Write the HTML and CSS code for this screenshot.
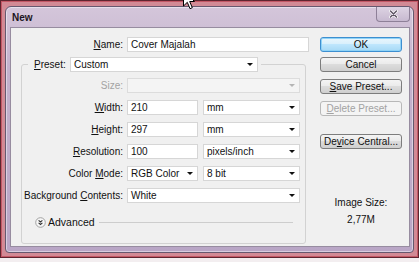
FILE: index.html
```html
<!DOCTYPE html>
<html lang="en">
<head>
    <meta charset="UTF-8">
    <title>New</title>
    <link rel="stylesheet" href="styles.css">
</head>
<body>
<div class="desk">
    <svg class="cursor" width="13" height="20" viewBox="0 0 13 20"><path d="M0.5 0.5 L0.5 16 L4.3 12.3 L7 18.7 L9.3 17.7 L6.7 11.5 L11.5 11.5 Z" fill="#fff" stroke="#000" stroke-width="1"/></svg>
    <div class="window">
        <div class="titlebar">
            <span class="title">New</span>
            <span class="close">
                <svg width="9" height="8" viewBox="0 0 9 8"><path d="M1.5 1 L7.5 7 M7.5 1 L1.5 7" stroke="#fff" stroke-width="3" stroke-linecap="round"/><path d="M1.5 1 L7.5 7 M7.5 1 L1.5 7" stroke="#5e5566" stroke-width="1.5" stroke-linecap="round"/></svg>
            </span>
        </div>
        <div class="client">
            <div class="form">
                <div class="row">
                    <label class="lbl name-lbl"><u>N</u>ame:</label>
                    <div class="field name-field">Cover Majalah</div>
                </div>

                <div class="group">
                    <div class="preset">
                        <label class="preset-lbl"><u>P</u>reset:</label>
                        <div class="field select preset-field">Custom<i class="arrow"></i></div>
                    </div>

                    <div class="rows">
                        <div class="row">
                            <label class="lbl off">Size:</label>
                            <div class="field select full off"><span></span><i class="arrow"></i></div>
                        </div>
                        <div class="row">
                            <label class="lbl"><u>W</u>idth:</label>
                            <div class="field small">210</div>
                            <div class="field select unit">mm<i class="arrow"></i></div>
                        </div>
                        <div class="row">
                            <label class="lbl"><u>H</u>eight:</label>
                            <div class="field small">297</div>
                            <div class="field select unit">mm<i class="arrow"></i></div>
                        </div>
                        <div class="row">
                            <label class="lbl"><u>R</u>esolution:</label>
                            <div class="field small">100</div>
                            <div class="field select unit">pixels/inch<i class="arrow"></i></div>
                        </div>
                        <div class="row">
                            <label class="lbl">Color <u>M</u>ode:</label>
                            <div class="field select small">RGB Color<i class="arrow"></i></div>
                            <div class="field select unit">8 bit<i class="arrow"></i></div>
                        </div>
                        <div class="row">
                            <label class="lbl">Background <u>C</u>ontents:</label>
                            <div class="field select full">White<i class="arrow"></i></div>
                        </div>
                    </div>

                    <div class="advanced">
                        <svg class="chev" width="11" height="11" viewBox="0 0 11 11">
                            <circle cx="5.5" cy="5.5" r="4.8" fill="#f7f7f7" stroke="#a2a2a2"/>
                            <path d="M3.6 3.4 L5.5 5 L7.4 3.4 M3.6 5.9 L5.5 7.5 L7.4 5.9" fill="none" stroke="#333" stroke-width="1.1"/>
                        </svg>
                        <span>Advanced</span>
                        <span class="rule"></span>
                    </div>
                </div>
            </div>

            <div class="side">
                <button class="btn ok">OK</button>
                <button class="btn cancel">Cancel</button>
                <button class="btn save"><u>S</u>ave Preset...</button>
                <button class="btn off delete"><u>D</u>elete Preset...</button>
                <button class="btn device">De<u>v</u>ice Central...</button>
                <div class="size-lbl">Image Size:</div>
                <div class="size-val">2,77M</div>
            </div>
        </div>
    </div>
</div>
</body>
</html>
```

FILE: styles.css
```css
*{
    margin:0;
    padding:0;
    box-sizing:border-box;
}
body {
    background:#f3eef0;
    font-family:"Liberation Sans", Arial, sans-serif;
    font-size:10px;
    color:#111;
}
.desk {
    position:relative;
    width:419px;
    height:258px;
    border:1px solid #5e2630;
    box-shadow:inset 0 0 0 1px #c45866;
    background:#d28a95;
    padding:5px 0 0 4px;
}
.cursor {
    position:absolute;
    left:182px;
    top:-11px;
    z-index:2;
}
.window {
    width:409px;
    height:247px;
    border:1px solid #66586f;
    border-radius:6px 6px 4px 4px;
    background:linear-gradient(#d4c6da, #c4b2cd 25%, #b9a6c6);
    box-shadow:inset 0 0 0 1px rgba(255,255,255,0.45);
    padding:0 3px 5px 4px;
    display:flex;
    flex-direction:column;
}
.titlebar {
    height:20px;
    display:flex;
    justify-content:space-between;
    align-items:flex-start;
}
.title {
    padding:5px 0 0 2px;
    font-weight:bold;
    color:#1d1522;
}
.close {
    width:34px;
    height:15px;
    border:1px solid #8e8098;
    border-top:none;
    border-radius:0 0 4px 4px;
    background:linear-gradient(#ddd3e3, #c7b9d0);
    display:flex;
    align-items:center;
    justify-content:center;
}
.client {
    flex:1;
    border:1px solid #978ca0;
    background:#f0f0f0;
    display:flex;
}
.form {
    width:298px;
    padding:9px 0 0 10px;
}
.row {
    display:flex;
    align-items:center;
    height:15px;
}
.lbl {
    width:101px;
    text-align:right;
    white-space:nowrap;
}
.name-lbl {
    width:102px;
}
.off {
    color:#a3a3a3;
}
.field {
    height:15px;
    margin-left:4px;
    padding:0 4px 0 3px;
    background:#fff;
    border:1px solid #d6d6d6;
    line-height:13px;
    white-space:nowrap;
}
.select {
    display:flex;
    align-items:center;
    justify-content:space-between;
}
.arrow {
    width:0;
    height:0;
    border-left:3px solid transparent;
    border-right:3px solid transparent;
    border-top:3px solid #111;
}
.off .arrow {
    border-top-color:#b5b5b5;
}
.field.off {
    background:#f4f4f4;
    border-color:#dcdcdc;
}
.name-field {
    width:182px;
}
.group {
    width:285px;
    height:180px;
    margin-top:12px;
    border:1px solid #d2d2d2;
    border-radius:3px;
}
.preset {
    display:flex;
    align-items:center;
    width:233px;
    height:15px;
    margin:-8px 0 0 6px;
    padding:0 3px 0 6px;
    background:#f0f0f0;
}
.preset-lbl {
    width:32px;
}
.preset-field {
    width:188px;
}
.rows {
    display:flex;
    flex-direction:column;
    gap:7px;
    margin-top:6px;
}
.full {
    width:173px;
}
.small {
    width:71px;
}
.unit {
    width:97px;
    margin-left:5px;
}
.advanced {
    display:flex;
    align-items:center;
    height:12px;
    margin:13px 12px 0 13px;
    font-size:10.5px;
}
.chev {
    margin-right:2px;
}
.rule {
    flex:1;
    height:1px;
    margin-left:4px;
    background:#cdcdcd;
}
.side {
    width:82px;
    margin-left:11px;
    padding-top:9px;
    display:flex;
    flex-direction:column;
}
.btn {
    height:15px;
    font-family:"Liberation Sans", Arial, sans-serif;
    font-size:10px;
    color:#111;
    border:1px solid #7d7d7d;
    border-radius:3px;
    background:linear-gradient(#f4f4f4, #ebebeb 45%, #dcdcdc 50%, #cfcfcf);
    line-height:13px;
    text-align:center;
}
.btn.ok {
    border-color:#3d8fd0;
    box-shadow:inset 0 0 0 1px #8fd3f7;
    background:linear-gradient(#eaf6fd, #d9f0fc 45%, #bee6fd 50%, #a7d9f5);
}
.cancel {
    margin-top:5px;
}
.save {
    margin-top:7px;
}
.btn.off {
    margin-top:7px;
    color:#a3a3a3;
    border-color:#b8b8b8;
    background:#f4f4f4;
}
.device {
    margin-top:18px;
}
.size-lbl {
    margin-top:48px;
    text-align:center;
}
.size-val {
    margin-top:6px;
    text-align:center;
}
```
